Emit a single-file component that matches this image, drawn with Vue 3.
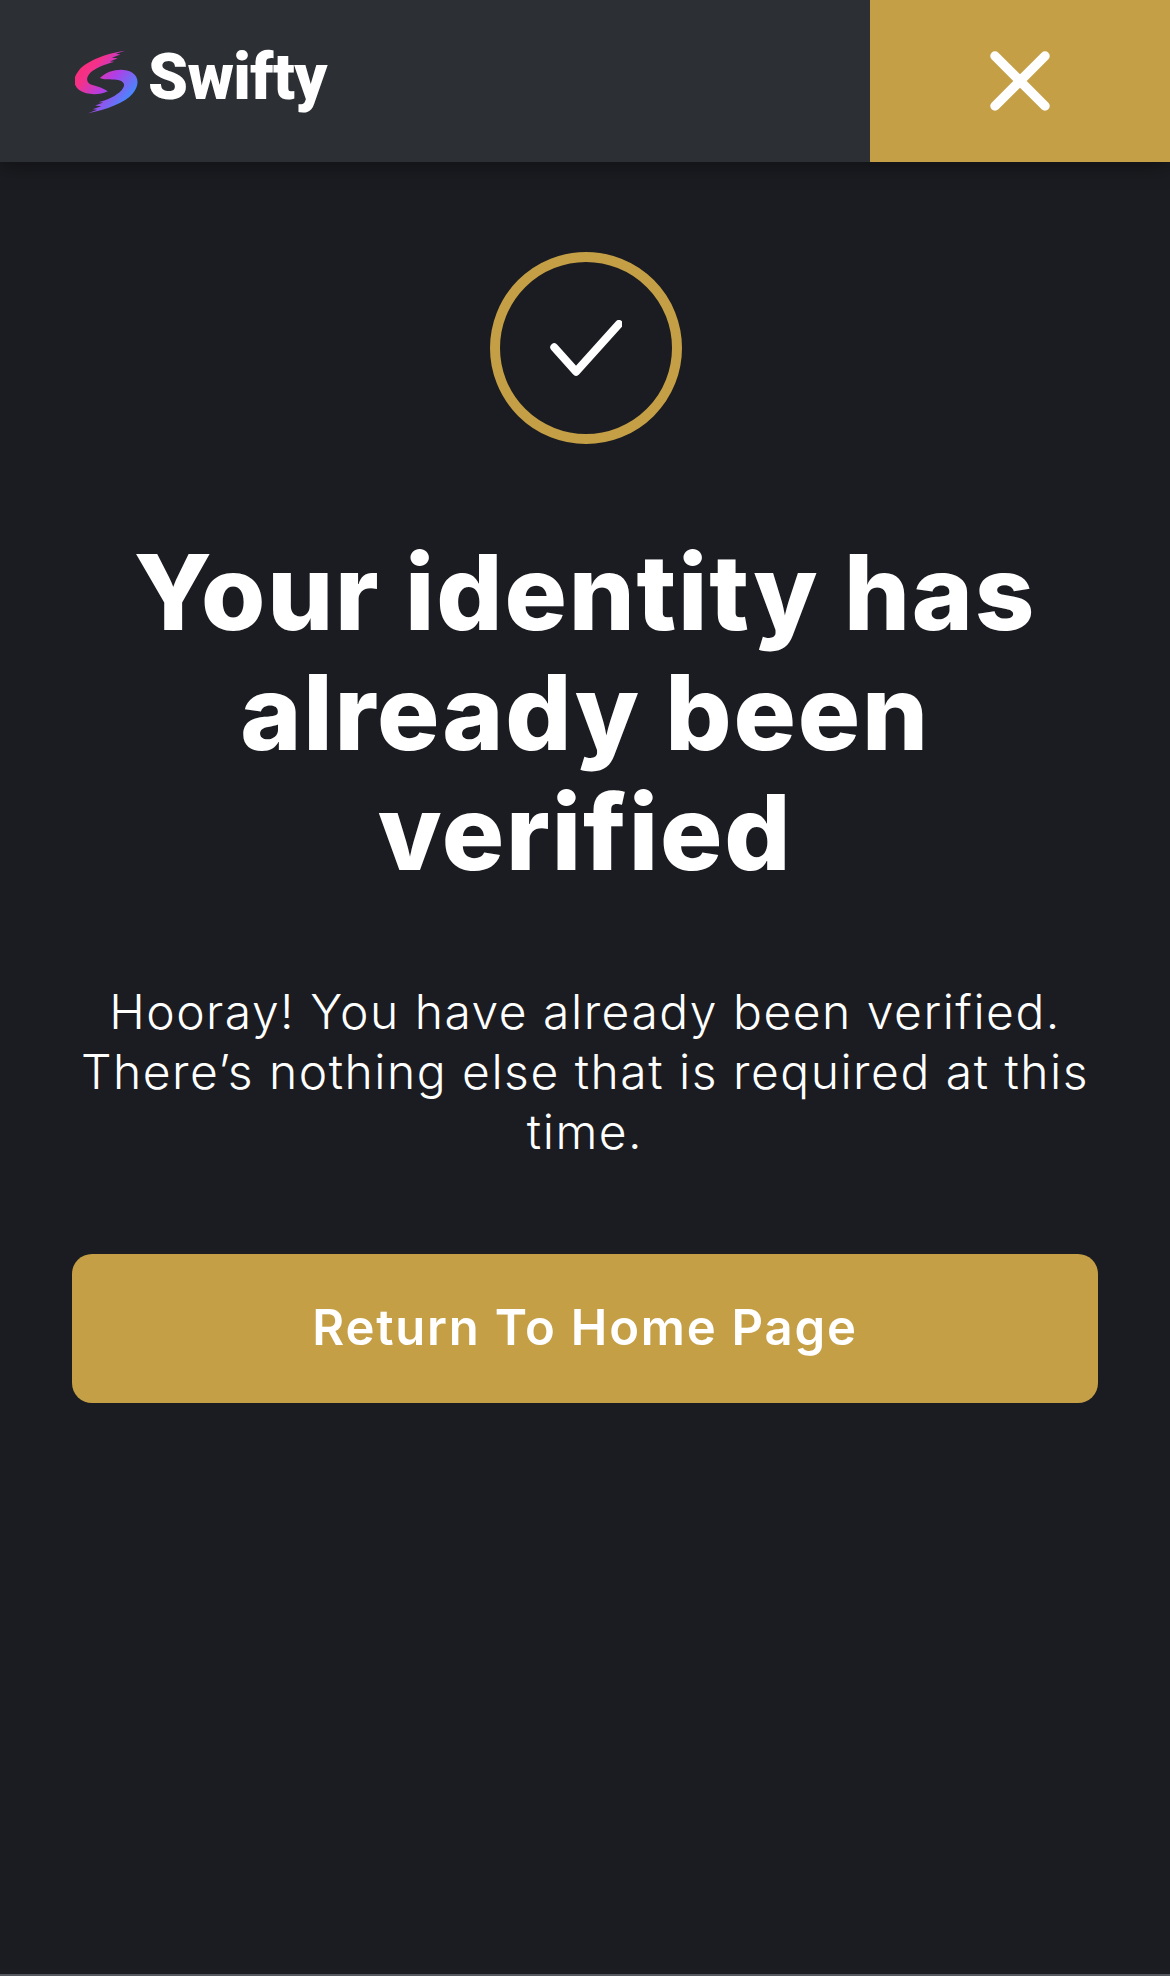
<template>
  <div class="page">
    <header class="topbar">
      <a class="brand" href="#">
        <svg class="brand-mark" viewBox="75 88 190 192" width="63" height="64">
          <defs>
            <linearGradient id="swirl" gradientUnits="userSpaceOnUse" x1="95" y1="125" x2="240" y2="240">
              <stop offset="0" stop-color="#fb2d78" />
              <stop offset="0.2" stop-color="#f4318a" />
              <stop offset="0.55" stop-color="#b23ee6" />
              <stop offset="1" stop-color="#3e8eff" />
            </linearGradient>
          </defs>
          <path fill="url(#swirl)" d="M226 90 L198 99 L212 101 L186 111 L204 112 L180 122 L194 123 C166 130 130 144 118 160 C107 175 110 188 128 193 C145 198 160 202 174 212 C150 224 110 224 90 210 C68 194 68 172 86 150 C110 120 170 98 226 90 Z" />
          <path fill="url(#swirl)" d="M150 172 C175 146 222 140 247 155 C270 170 268 196 248 220 C225 246 170 268 114 278 L142 268 L128 266 L154 257 L136 255 L160 246 L146 245 C172 238 200 226 216 208 C228 193 224 184 208 179 C190 174 168 180 150 172 Z" />
        </svg>
        <span class="brand-name">Swifty</span>
      </a>
      <button class="close-btn" type="button" aria-label="Close">
        <svg viewBox="0 0 60 60" width="60" height="60">
          <path d="M5 5 L55 55 M55 5 L5 55" stroke="#fff" stroke-width="9.5" stroke-linecap="round" fill="none" />
        </svg>
      </button>
    </header>

    <main class="content">
      <div class="badge">
        <svg viewBox="0 0 72 56" width="72" height="56">
          <path d="M4.3 27.3 L26 51.7 L69 4" stroke="#fff" stroke-width="8" stroke-linecap="round" stroke-linejoin="round" fill="none" />
        </svg>
      </div>
      <h1>Your identity has already been verified</h1>
      <p>Hooray! You have already been verified. There’s nothing else that is required at this time.</p>
      <a class="home-btn" href="#">Return To Home Page</a>
    </main>
    <div class="bottom-line"></div>
  </div>
</template>

<script setup>
</script>

<style>
html,
body {
  margin: 0;
  background: #1b1c21;
}
</style>

<style scoped>
.page {
  height: 1976px;
  display: flex;
  flex-direction: column;
  background: #1b1c21;
  color: #fff;
  font-family: Inter, "Liberation Sans", sans-serif;
  overflow: hidden;
}

.topbar {
  height: 162px;
  flex: none;
  display: flex;
  justify-content: space-between;
  background: #2c2f34;
  box-shadow: 0 4px 20px rgba(0, 0, 0, 0.4);
  z-index: 1;
}

.brand {
  display: flex;
  align-items: center;
  gap: 10px;
  padding-left: 75px;
  color: #fff;
  text-decoration: none;
}

.brand-mark {
  margin-top: 2px;
}

.brand-name {
  font-family: Roboto, sans-serif;
  font-weight: 900;
  font-size: 64px;
  line-height: 64px;
  letter-spacing: -0.6px;
  margin-bottom: 6px;
}

.close-btn {
  width: 300px;
  border: 0;
  padding: 0;
  background: #c49f45;
  display: flex;
  align-items: center;
  justify-content: center;
}

.content {
  flex: 1;
  display: flex;
  flex-direction: column;
  align-items: center;
  padding: 90px 72px 0;
  text-align: center;
}

.badge {
  width: 192px;
  height: 192px;
  margin-left: 2px;
  box-sizing: border-box;
  border: 10px solid #c49f45;
  border-radius: 50%;
  display: flex;
  align-items: center;
  justify-content: center;
}

h1 {
  margin: 88px -20px 0;
  font-size: 104px;
  line-height: 120px;
  font-weight: 800;
  letter-spacing: 1.8px;
}

p {
  margin: 90px -5px 0;
  font-size: 48px;
  line-height: 60px;
  font-weight: 300;
  letter-spacing: 1.5px;
}

.home-btn {
  margin-top: 92px;
  align-self: stretch;
  height: 149px;
  padding-bottom: 3px;
  box-sizing: border-box;
  border-radius: 20px;
  background: #c49f45;
  color: #fff;
  display: flex;
  align-items: center;
  justify-content: center;
  font-size: 49px;
  font-weight: 600;
  letter-spacing: 1.8px;
  text-decoration: none;
}

.bottom-line {
  height: 2px;
  flex: none;
  background: #55585e;
}
</style>
